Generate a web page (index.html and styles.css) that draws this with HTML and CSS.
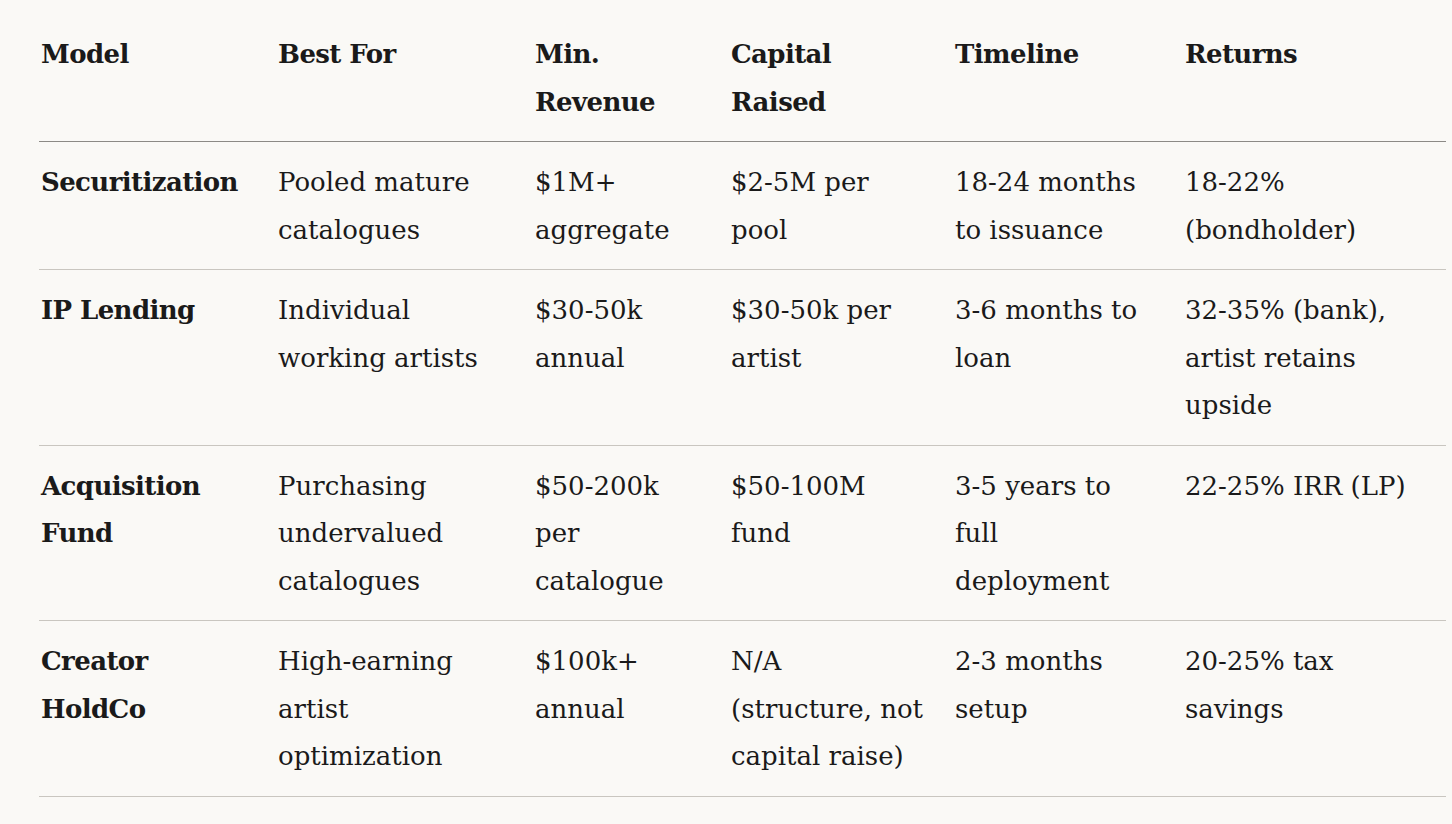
FILE: index.html
```html
<!DOCTYPE html>
<html lang="en">
<head>
<meta charset="utf-8">
<title>Models</title>
<link rel="stylesheet" href="styles.css">
</head>
<body>
<div class="page">
  <table class="models">
    <colgroup>
      <col class="c1"><col class="c2"><col class="c3"><col class="c4"><col class="c5"><col class="c6">
    </colgroup>
    <thead>
      <tr>
        <th>Model</th>
        <th>Best For</th>
        <th>Min. Revenue</th>
        <th>Capital Raised</th>
        <th>Timeline</th>
        <th>Returns</th>
      </tr>
    </thead>
    <tbody>
      <tr>
        <td class="name">Securitization</td>
        <td>Pooled mature catalogues</td>
        <td>$1M+ aggregate</td>
        <td>$2-5M per pool</td>
        <td>18-24 months to issuance</td>
        <td>18-22% (bondholder)</td>
      </tr>
      <tr>
        <td class="name">IP Lending</td>
        <td>Individual working artists</td>
        <td>$30-50k annual</td>
        <td>$30-50k per artist</td>
        <td>3-6 months to loan</td>
        <td>32-35% (bank), artist retains upside</td>
      </tr>
      <tr>
        <td class="name">Acquisition Fund</td>
        <td>Purchasing undervalued catalogues</td>
        <td>$50-200k per catalogue</td>
        <td>$50-100M fund</td>
        <td>3-5 years to full deployment</td>
        <td>22-25% IRR (LP)</td>
      </tr>
      <tr>
        <td class="name">Creator HoldCo</td>
        <td>High-earning artist optimization</td>
        <td>$100k+ annual</td>
        <td>N/A (structure, not capital raise)</td>
        <td>2-3 months setup</td>
        <td>20-25% tax savings</td>
      </tr>
    </tbody>
  </table>
</div>
</body>
</html>
```

FILE: styles.css
```css
html, body {
  margin: 0;
  padding: 0;
  background: #faf9f6;
}

.page {
  padding: 14px 6px 20px 39px;
  font-family: "DejaVu Serif", "Liberation Serif", serif;
  color: #1a1a1a;
}

.models {
  width: 1407px;
  table-layout: fixed;
  border-collapse: collapse;
  font-size: 26px;
  line-height: 47.5px;
}

.c1 { width: 237px; }
.c2 { width: 257px; }
.c3 { width: 196px; }
.c4 { width: 224px; }
.c5 { width: 230px; }
.c6 { width: 263px; }

.models th,
.models td {
  text-align: left;
  vertical-align: top;
  padding: 17px 8px 15px 2px;
}

.models th {
  font-weight: bold;
  letter-spacing: -0.6px;
  border-bottom: 1px solid #8c8a86;
}

.models td {
  font-weight: normal;
  border-bottom: 1px solid #c9c6c0;
}

.models td.name {
  font-weight: bold;
  letter-spacing: -0.6px;
}

.models th:nth-child(1),
.models td:nth-child(1) {
  padding-right: 30px;
}

.models th:nth-child(2),
.models td:nth-child(2) {
  padding-right: 40px;
}

.models th:nth-child(3),
.models td:nth-child(3) {
  padding-right: 18px;
}

.models th:nth-child(4),
.models td:nth-child(4) {
  padding-right: 27px;
}

.models th:nth-child(5),
.models td:nth-child(5) {
  padding-right: 30px;
}
```
